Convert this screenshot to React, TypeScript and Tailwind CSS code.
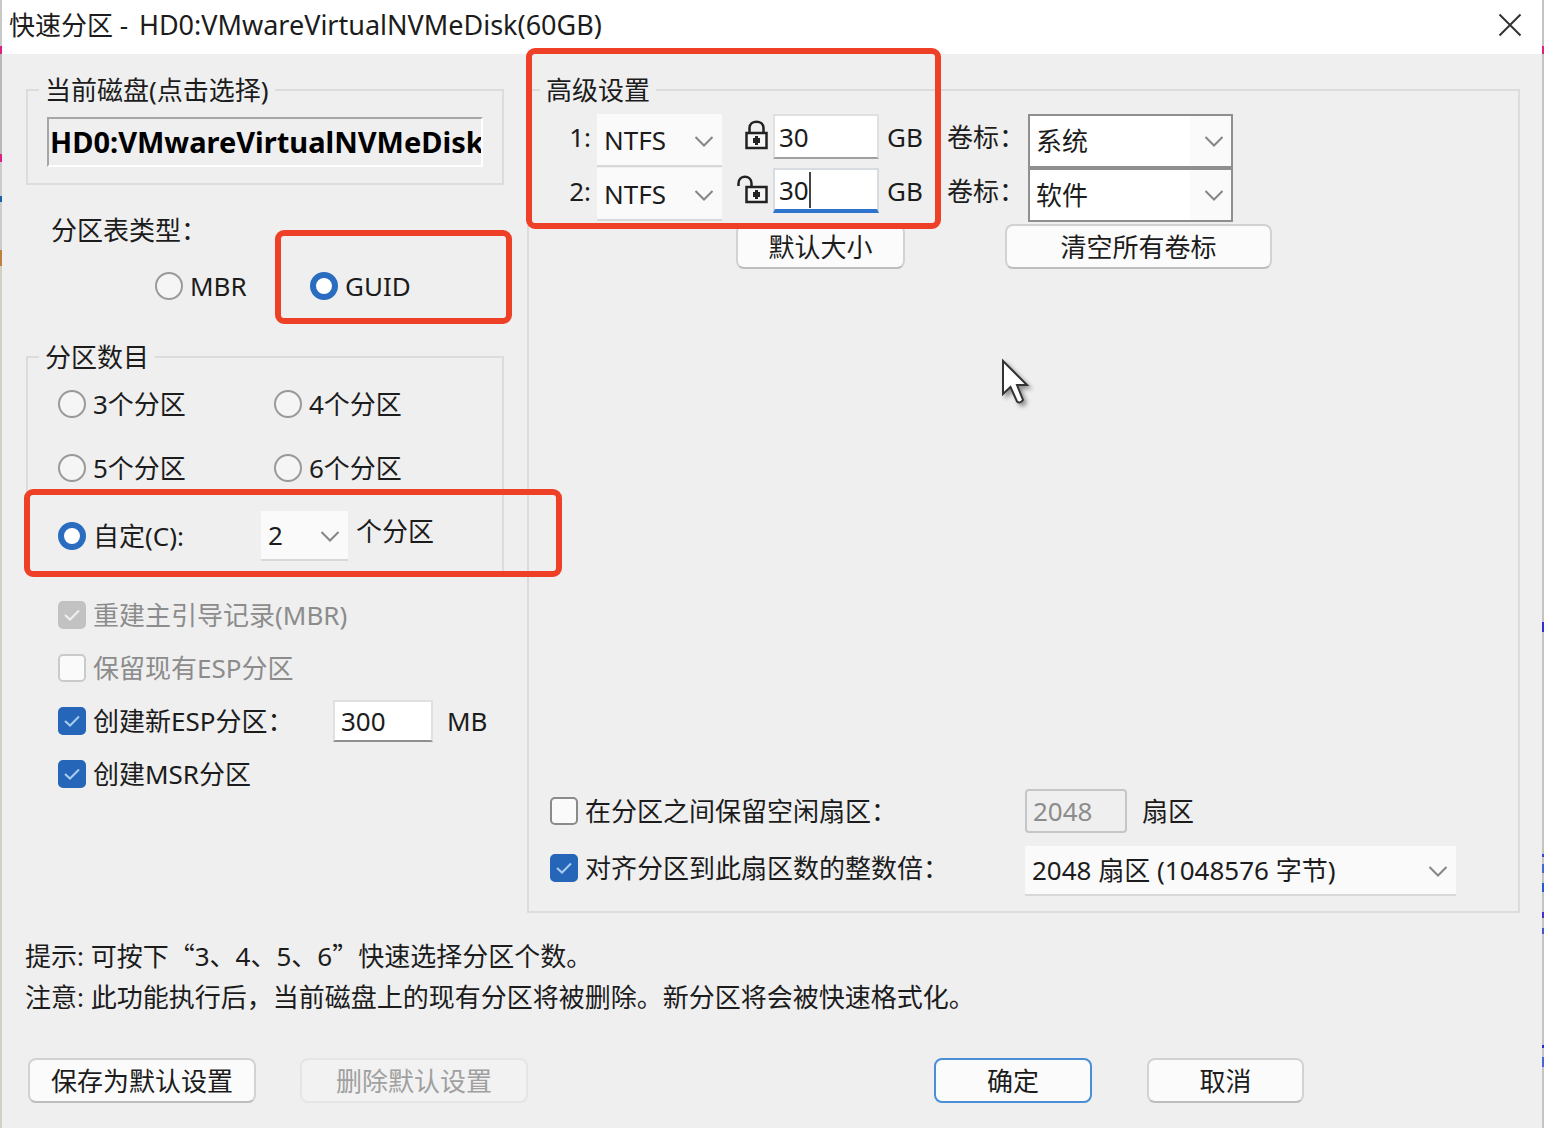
import React from "react";

const volumes = [
  { id: 1, size: "30", label: "系统", locked: true },
  { id: 2, size: "30", label: "软件", locked: false },
];

const counts = ["3", "4", "5", "6"];

const Chevron: React.FC<{ className?: string }> = ({ className }) => (
  <svg
    className={`pointer-events-none absolute top-1/2 h-3 w-5 -translate-y-1/2 ${className}`}
    viewBox="0 0 20 12"
    fill="none"
    stroke="#858585"
    strokeWidth="2"
  >
    <path d="M1.500 2 L10 10.500 L18.500 2" />
  </svg>
);

const LockIcon: React.FC<{ open?: boolean }> = ({ open }) => (
  <svg
    className="h-8 w-8"
    viewBox="0 0 32 32"
    fill="none"
    stroke="#222222"
    strokeWidth="2.5"
  >
    <rect x="9.500" y="13" width="20" height="15" fill="#f5f5f5" />
    {open ? (
      <path d="M1.500 12 V9.500 C1.500 0.500 14.500 0.500 14.500 9.500 V13" />
    ) : (
      <path d="M12.500 13 V8 C12.500 -0.500 26.500 -0.500 26.500 8 V13" />
    )}
    <path d="M19.500 16 V25" strokeWidth="3" />
    <path d="M16 20.500 H23" strokeWidth="5" />
  </svg>
);

const Group: React.FC<{
  title: string;
  className?: string;
  children: React.ReactNode;
}> = ({ title, className = "", children }) => (
  <fieldset className={`min-w-0 border-2 border-[#dcdcdc] ${className}`}>
    <legend className="ml-[11px] px-1.5">{title}</legend>
    {children}
  </fieldset>
);

const Radio: React.FC<{
  name: string;
  label: string;
  checked?: boolean;
}> = ({ name, label, checked }) => (
  <label className="flex h-8 items-center gap-[7px] whitespace-nowrap">
    <input
      type="radio"
      name={name}
      defaultChecked={checked}
      className="size-7 shrink-0 appearance-none rounded-full border-2 border-[#9a9a9a] bg-[#f5f5f5] checked:border-[6px] checked:border-[#2a6cc0] checked:bg-white"
    />
    {label}
  </label>
);

const Check: React.FC<{
  label: string;
  checked?: boolean;
  disabled?: boolean;
}> = ({ label, checked, disabled }) => (
  <label
    className={`flex items-center gap-[7px] whitespace-nowrap ${disabled ? "text-[#8c8c8c]" : ""}`}
  >
    <span className="relative flex size-7 shrink-0">
      <input
        type="checkbox"
        defaultChecked={checked}
        disabled={disabled}
        className="size-7 appearance-none rounded-[5px] border-2 border-[#8a8a8a] bg-[#fafafa] checked:border-[#2666b8] checked:bg-[#2666b8] disabled:border-[#cacaca] disabled:checked:border-[#c2c2c2] disabled:checked:bg-[#c2c2c2]"
      />
      {checked && (
        <svg
          className="pointer-events-none absolute inset-0"
          viewBox="0 0 28 28"
          fill="none"
          stroke={disabled ? "#f0f0f0" : "#a9cdf0"}
          strokeWidth="2"
        >
          <path d="M7 14 L12 18.500 L21 9.500" />
        </svg>
      )}
    </span>
    {label}
  </label>
);

const FlatSelect: React.FC<{
  name: string;
  options: string[];
  className?: string;
}> = ({ name, options, className = "" }) => (
  <div className={`relative ${className}`}>
    <select
      aria-label={name}
      className="h-full w-full appearance-none border-b-2 border-[#d8d8d8] bg-[#fafafa] pl-[7px]"
    >
      {options.map((option) => (
        <option key={option}>{option}</option>
      ))}
    </select>
    <Chevron className="right-2" />
  </div>
);

const Highlight: React.FC<{ className: string }> = ({ className }) => (
  <div
    className={`pointer-events-none absolute z-10 rounded-[9px] border-6 border-[#ee4027] ${className}`}
  />
);

const button =
  "h-[45px] rounded-lg border-2 border-[#d2d2d2] border-b-[#bdbdbd] bg-[#fbfbfb]";

const LeftColumn: React.FC = () => (
  <div>
    <Group title="当前磁盘(点击选择)">
      <div className="px-[19px] pt-[11px] pb-4">
        <button className="block h-[50px] w-full overflow-hidden border-2 border-t-[#a6a6a6] border-r-white border-b-white border-l-[#a6a6a6] pl-px text-left text-[29px] font-bold whitespace-nowrap text-black">
          HD0:VMwareVirtualNVMeDisk
        </button>
      </div>
    </Group>

    <div className="mt-[29px] pl-[25px]">分区表类型：</div>
    <div className="mt-6 flex pl-[129px]">
      <div className="w-[155px]">
        <Radio name="table" label="MBR" />
      </div>
      <div className="relative">
        <Radio name="table" label="GUID" checked />
        <Highlight className="-top-10 -left-[35px] h-[94px] w-[237px]" />
      </div>
    </div>

    <Group title="分区数目" className="mt-[39px]">
      <div className="px-[30px] pt-[15px] pb-[11px]">
        <div className="grid grid-cols-[216px_1fr] gap-y-8">
          {counts.map((n) => (
            <Radio key={n} name="count" label={`${n}个分区`} />
          ))}
        </div>
        <div className="relative mt-[27px] flex h-[50px] items-center">
          <div className="w-[203px]">
            <Radio name="count" label="自定(C):" checked />
          </div>
          <FlatSelect
            name="分区个数"
            options={["2", "1", "3", "4"]}
            className="h-full w-[87px]"
          />
          <span className="self-start pt-1 pl-2">个分区</span>
          <Highlight className="-top-[22px] -left-[34px] h-[88px] w-[538px]" />
        </div>
      </div>
    </Group>

    <div className="mt-[14px] grid auto-rows-[53px] items-center pl-8">
      <Check label="重建主引导记录(MBR)" checked disabled />
      <Check label="保留现有ESP分区" disabled />
      <div className="flex items-center">
        <div className="w-[275px]">
          <Check label="创建新ESP分区：" checked />
        </div>
        <input
          aria-label="ESP分区大小"
          defaultValue="300"
          className="h-[42px] w-[100px] border-2 border-[#e0e0e0] border-b-[#8f8f8f] bg-white px-1.5"
        />
        <span className="pl-[14px]">MB</span>
      </div>
      <Check label="创建MSR分区" checked />
    </div>
  </div>
);

const Advanced: React.FC = () => (
  <Group title="高级设置">
    <div className="relative pt-2">
      {volumes.map((v) => (
        <div
          key={v.id}
          className="grid h-[54px] grid-cols-[68px_125px_51px_106px_68px_81px_205px] leading-[46px]"
        >
          <span className="pr-1.5 text-right">{v.id}:</span>
          <FlatSelect
            name={`文件系统${v.id}`}
            options={["NTFS", "FAT32", "EXFAT"]}
            className="h-[53px]"
          />
          <span className="flex justify-end pt-1.5 pr-1">
            <LockIcon open={!v.locked} />
          </span>
          <div className="relative">
            <input
              aria-label={`分区${v.id}大小`}
              defaultValue={v.size}
              className={
                v.locked
                  ? "block h-[45px] w-full border-2 border-[#e0e0e0] border-b-[#a0a0a0] bg-white px-1"
                  : "block h-[45px] w-full border-2 border-b-4 border-[#d8dce0] border-b-[#2f74cc] bg-white px-1"
              }
            />
            {!v.locked && (
              <span className="absolute top-1 left-9 h-9 w-0.5 bg-[#444444]" />
            )}
          </div>
          <span className="pl-2">GB</span>
          <label htmlFor={`volume-${v.id}`}>卷标：</label>
          <div className="relative h-[54px]">
            <select
              id={`volume-${v.id}`}
              className="h-full w-full appearance-none border-2 border-[#8f8f8f] bg-white bg-[linear-gradient(to_right,#ffffff_160px,#fafafa_160px)] pl-1.5"
            >
              <option>{v.label}</option>
              <option>文档</option>
              <option>娱乐</option>
            </select>
            <Chevron className="right-[9px]" />
          </div>
        </div>
      ))}
      <Highlight className="-top-[58px] -left-[3px] h-[181px] w-[415px]" />
    </div>

    <div className="flex gap-[100px] pt-0.5 pl-[207px]">
      <button className={`${button} w-[169px]`}>默认大小</button>
      <button className={`${button} w-[267px]`}>清空所有卷标</button>
    </div>

    <div className="relative h-[520px]">
      <svg
        className="absolute top-[88px] left-[470px] h-14 w-10"
        viewBox="0 0 40 56"
      >
        <path
          d="M4 4 V37 L11.500 30 L18 44.500 Q21 47 24 43 L18 28 H28 Z"
          fill="#ffffff"
          stroke="#333333"
          strokeWidth="2"
          className="drop-shadow-[3px_3px_2px_rgba(0,0,0,0.4)]"
        />
      </svg>
    </div>

    <div className="grid grid-cols-[475px_1fr] gap-y-[13px] pb-[15px] pl-[21px]">
      <Check label="在分区之间保留空闲扇区：" />
      <div className="flex items-center gap-[15px]">
        <input
          aria-label="保留扇区数"
          defaultValue="2048"
          disabled
          className="h-11 w-[102px] rounded-sm border-2 border-[#c4c6c8] bg-[#efefef] px-1.5 text-[#8c8c8c]"
        />
        <span>扇区</span>
      </div>
      <div className="flex h-11">
        <Check label="对齐分区到此扇区数的整数倍：" checked />
      </div>
      <FlatSelect
        name="对齐扇区数"
        options={["2048 扇区 (1048576 字节)", "4096 扇区 (2097152 字节)"]}
        className="h-[50px] w-[431px]"
      />
    </div>
  </Group>
);

export default function App() {
  return (
    <div
      lang="zh-CN"
      className="flex min-h-screen bg-[#efefef] font-['Noto_Sans','Noto_Sans_CJK_SC',sans-serif] text-[26px] leading-8 text-[#1c1c1c]"
    >
      <div className="w-0.5 bg-[linear-gradient(#c8c8c8_0_46px,#e02080_46px_54px,#b8b8b8_54px_154px,#e02080_154px_162px,#cccccc_162px_196px,#1860a8_196px_202px,#cccccc_202px_250px,#c08040_250px_266px,#d0d0c4_266px)]" />

      <main className="min-w-0 flex-1">
        <header className="flex h-[54px] items-center justify-between bg-white pr-5 pb-1 pl-[7px]">
          <h1>
            快速分区 -{" "}
            <span className="pl-1 text-[27px]">
              HD0:VMwareVirtualNVMeDisk(60GB)
            </span>
          </h1>
          <button aria-label="关闭">
            <svg
              className="size-6"
              viewBox="0 0 24 24"
              stroke="#333333"
              strokeWidth="2"
            >
              <path d="M1.500 1.500 L22.500 22.500 M22.500 1.500 L1.500 22.500" />
            </svg>
          </button>
        </header>

        <div className="grid grid-cols-[478px_1fr] gap-[23px] pt-5 pr-[22px] pl-6">
          <LeftColumn />
          <Advanced />
        </div>

        <div className="pt-[21px] pl-[23px] leading-[41px]">
          <p>
            提示: 可按下
            <span className="font-['Noto_Sans_CJK_SC',sans-serif]">“</span>
            3、4、5、6
            <span className="font-['Noto_Sans_CJK_SC',sans-serif]">”</span>
            快速选择分区个数。
          </p>
          <p>
            注意: 此功能执行后，当前磁盘上的现有分区将被删除。新分区将会被快速格式化。
          </p>
        </div>

        <footer className="flex justify-between pt-10 pr-[238px] pb-6 pl-[26px]">
          <div className="flex gap-11">
            <button className={`${button} w-[228px]`}>保存为默认设置</button>
            <button
              disabled
              className="h-[45px] w-[228px] rounded-lg border-2 border-[#e5e5e5] bg-[#f2f2f2] text-[#a0a0a0]"
            >
              删除默认设置
            </button>
          </div>
          <div className="flex gap-[55px]">
            <button className="h-[45px] w-[158px] rounded-lg border-2 border-[#4a8ed6] bg-[#fbfbfb]">
              确定
            </button>
            <button className={`${button} w-[157px]`}>取消</button>
          </div>
        </footer>
      </main>

      <div className="w-0.5 bg-[linear-gradient(#c4c4c4_0_46px,#e02080_46px_54px,#c4c4c4_54px_622px,#3030d0_622px_632px,#c4c4c4_632px_854px,#3048d0_854px_857px,#c4c4c4_857px_864px,#4868d0_864px_873px,#c4c4c4_873px_883px,#2858d0_883px_892px,#c4c4c4_892px_912px,#4830c8_912px_918px,#c4c4c4_918px_928px,#4858c8_928px_934px,#c4c4c4_934px_1045px,#2030d0_1045px_1048px,#c4c4c4_1048px_1057px,#4868d0_1057px_1067px,#c4c4c4_1067px)]" />
    </div>
  );
}
